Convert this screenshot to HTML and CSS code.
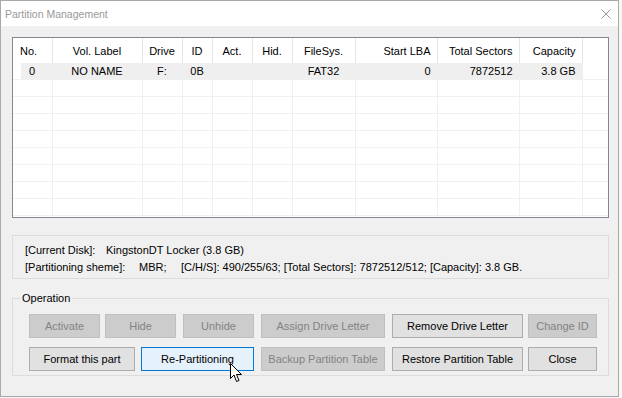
FILE: index.html
```html
<!DOCTYPE html>
<html lang="en">
<head>
    <meta charset="UTF-8">
    <title>Partition Management</title>
    <link rel="stylesheet" href="styles.css">
</head>
<body>
    <div class="window">
        <div class="titlebar">
            <span class="title">Partition Management</span>
            <svg class="close" width="10" height="10" viewBox="0 0 10 10">
                <path d="M0.5 0.5 L9.5 9.5 M9.5 0.5 L0.5 9.5" stroke="#9a9a9a" stroke-width="1" fill="none"/>
            </svg>
        </div>

        <div class="content">
            <div class="list">
                <table class="parts">
                    <colgroup>
                        <col style="width:39px"><col style="width:90px"><col style="width:40px">
                        <col style="width:30px"><col style="width:40px"><col style="width:40px">
                        <col style="width:63px"><col style="width:82px"><col style="width:82px">
                        <col style="width:63px"><col>
                    </colgroup>
                    <thead>
                        <tr>
                            <th class="left">No.</th>
                            <th>Vol. Label</th>
                            <th>Drive</th>
                            <th>ID</th>
                            <th>Act.</th>
                            <th>Hid.</th>
                            <th>FileSys.</th>
                            <th class="right">Start LBA</th>
                            <th class="right">Total Sectors</th>
                            <th class="right">Capacity</th>
                            <th class="filler"></th>
                        </tr>
                    </thead>
                    <tbody>
                        <tr class="selected">
                            <td class="num">0</td>
                            <td>NO NAME</td>
                            <td>F:</td>
                            <td>0B</td>
                            <td></td>
                            <td></td>
                            <td>FAT32</td>
                            <td class="right">0</td>
                            <td class="right">7872512</td>
                            <td class="right">3.8 GB</td>
                            <td class="filler"></td>
                        </tr>
                        <tr><td></td><td></td><td></td><td></td><td></td><td></td><td></td><td></td><td></td><td></td><td class="filler"></td></tr>
                        <tr><td></td><td></td><td></td><td></td><td></td><td></td><td></td><td></td><td></td><td></td><td class="filler"></td></tr>
                        <tr><td></td><td></td><td></td><td></td><td></td><td></td><td></td><td></td><td></td><td></td><td class="filler"></td></tr>
                        <tr><td></td><td></td><td></td><td></td><td></td><td></td><td></td><td></td><td></td><td></td><td class="filler"></td></tr>
                        <tr><td></td><td></td><td></td><td></td><td></td><td></td><td></td><td></td><td></td><td></td><td class="filler"></td></tr>
                        <tr><td></td><td></td><td></td><td></td><td></td><td></td><td></td><td></td><td></td><td></td><td class="filler"></td></tr>
                        <tr><td></td><td></td><td></td><td></td><td></td><td></td><td></td><td></td><td></td><td></td><td class="filler"></td></tr>
                        <tr><td></td><td></td><td></td><td></td><td></td><td></td><td></td><td></td><td></td><td></td><td class="filler"></td></tr>
                    </tbody>
                </table>
            </div>

            <div class="info">
                <div class="info-line">
                    <span class="key key-disk">[Current Disk]:</span>
                    <span>KingstonDT Locker (3.8 GB)</span>
                </div>
                <div class="info-line">
                    <span class="key key-scheme">[Partitioning sheme]:</span>
                    <span class="scheme">MBR;</span>
                    <span>[C/H/S]: 490/255/63; [Total Sectors]: 7872512/512; [Capacity]: 3.8 GB.</span>
                </div>
            </div>

            <fieldset class="ops">
                <legend>Operation</legend>
                <div class="btn-row">
                    <button class="w71" disabled>Activate</button>
                    <button class="w71 pull2" disabled>Hide</button>
                    <button class="w71" disabled>Unhide</button>
                    <button class="w124" disabled>Assign Drive Letter</button>
                    <button class="w131">Remove Drive Letter</button>
                    <button class="w69 pull2" disabled>Change ID</button>
                </div>
                <div class="btn-row">
                    <button class="w106">Format this part</button>
                    <button class="w113 pull1 hover">Re-Partitioning</button>
                    <button class="w124" disabled>Backup Partition Table</button>
                    <button class="w131">Restore Partition Table</button>
                    <button class="w69 pull2">Close</button>
                </div>
            </fieldset>
        </div>

        <svg class="cursor" width="13" height="20" viewBox="0 0 13 20">
            <path d="M0.5 0.5 L0.5 15.5 L4 12 L6.5 18.5 L9 17.5 L6.5 11.5 L11.5 11.5 Z" fill="#fff" stroke="#000" stroke-width="1" stroke-linejoin="miter"/>
        </svg>
    </div>
</body>
</html>
```

FILE: styles.css
```css
body {
    margin: 0;
    background: #f7f7f7;
    font-family: "Liberation Sans", Arial, sans-serif;
    font-size: 11px;
    color: #000;
}
.window {
    position: relative;
    width: 619px;
    height: 397px;
    box-sizing: border-box;
    border: 1px solid #a9a9a9;
    background: #f0f0f0;
}
.titlebar {
    height: 25px;
    background: #fff;
    display: flex;
    align-items: center;
    justify-content: space-between;
    padding: 0 7px 0 4px;
}
.title {
    color: #999;
    font-size: 10.5px;
}
.content {
    padding: 11px 9px 0 11px;
}
.list {
    height: 181px;
    box-sizing: border-box;
    border: 1px solid #828790;
    background: #fff;
    overflow: hidden;
}
.parts {
    width: 100%;
    border-collapse: collapse;
    table-layout: fixed;
}
.parts th {
    height: 25px;
    padding: 0;
    font-weight: normal;
    text-align: center;
    border-right: 1px solid #e5e5e5;
    white-space: nowrap;
}
.parts td {
    height: 16px;
    padding: 0;
    text-align: center;
    border-right: 1px solid #f0f0f0;
    border-bottom: 1px solid #f0f0f0;
    white-space: nowrap;
}
.parts th.filler {
    border-right: none;
}
.parts td.filler {
    border-right: none;
}
.parts .left {
    text-align: left;
    padding-left: 7px;
}
.parts .right {
    text-align: right;
    padding-right: 6px;
}
.parts .selected td {
    background: #efefef;
    border-right-color: #efefef;
}
.parts .selected td.num {
    text-align: left;
    padding-left: 16px;
    background: linear-gradient(to right, #fff 8px, #efefef 8px);
}
.parts .selected td.filler {
    background: #fff;
    border-left: 1px solid #f0f0f0;
}
.info {
    margin-top: 17px;
    height: 44px;
    box-sizing: border-box;
    border: 1px solid #dcdcdc;
    padding: 5px 12px;
}
.info-line {
    display: flex;
    height: 17px;
    align-items: center;
    white-space: nowrap;
}
.key-disk {
    width: 81px;
}
.key-scheme {
    width: 114px;
}
.scheme {
    width: 42px;
}
.ops {
    margin: 13px 0 0;
    padding: 10px 0 0 16px;
    height: 84px;
    box-sizing: border-box;
    border: 1px solid #dcdcdc;
}
.ops legend {
    padding: 0 2px;
    margin-left: -9px;
}
.btn-row {
    display: flex;
    gap: 7px;
    margin-bottom: 9px;
}
button {
    height: 24px;
    padding: 0;
    font-family: "Liberation Sans", Arial, sans-serif;
    font-size: 11px;
    color: #000;
    background: #e1e1e1;
    border: 1px solid #adadad;
    border-radius: 0;
}
button:disabled {
    color: #838383;
    background: #cccccc;
    border-color: #bfbfbf;
}
button.hover {
    background: #e5f1fb;
    border-color: #0078d7;
}
.pull1 {
    margin-left: -1px;
}
.pull2 {
    margin-left: -2px;
}
.w69 { width: 69px; }
.w71 { width: 71px; }
.w106 { width: 106px; }
.w113 { width: 113px; }
.w124 { width: 124px; }
.w131 { width: 131px; }
.cursor {
    position: absolute;
    left: 229px;
    top: 362px;
}
```
